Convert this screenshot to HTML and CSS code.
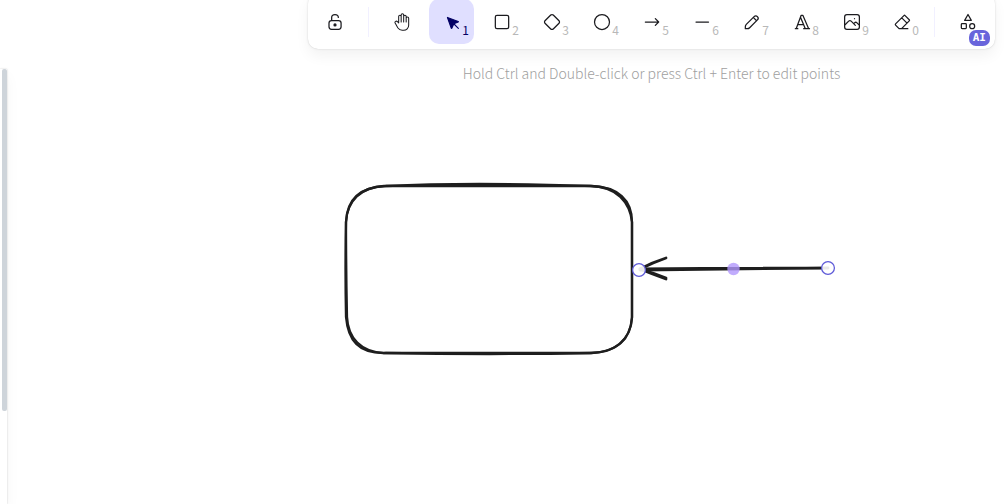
FILE: index.html
```html
<!DOCTYPE html>
<html lang="en">
<head>
<meta charset="utf-8">
<title>Whiteboard</title>
<link rel="stylesheet" href="styles.css">
</head>
<body>
<div class="app">
  <svg class="scene" aria-label="Drawing canvas">
    <g class="stroke">
      <path d="M386 186 Q470 182 592 186 C618 187 632 200 632 222 Q632 270 632 317 C631 340 616 352 592 353 Q490 355 386 353 C358 354 348 340 346 317 Q345 270 346 222 C347 200 360 187 386 186"/>
      <path d="M384 186 Q490 186 590 186 C617 186 630 203 632 222 L632 318 C630 341 614 353 590 353 Q490 353 384 353 C361 352 348 338 347 317 Q346 270 346 222 C347 201 361 187 384 186"/>
    </g>
    <g class="stroke arrow">
      <path d="M828 268 Q734 268 640 269 M828 268 Q734 269 640 270"/>
      <path d="M666 258 Q652 263 640 269 Q652 274 666 279 M666 258 Q653 262 640 269 Q654 273 666 278"/>
    </g>
    <circle class="handle" cx="639" cy="270" r="6.4"/>
    <circle class="handle" cx="828" cy="268" r="6.4"/>
    <circle class="midpoint" cx="733.5" cy="269" r="6.2"/>
  </svg>

  <aside class="sidebar"><div class="thumb"></div></aside>

  <header class="top">
    <div class="toolbar" role="toolbar" aria-label="Shapes">
      <button class="tool" aria-label="Keep selected tool active">
        <svg class="icon" viewBox="0 0 20 20"><rect x="3" y="8.54" width="12.08" height="8.75" rx="2.5"/><circle class="solid" cx="9" cy="12.9" r="1"/><path d="M5.67 8.33V5.42C5.67 3.8 7.16 2.5 9 2.5c1.84 0 3.33 1.3 3.33 2.92"/></svg>
      </button>
      <span class="divider"></span>
      <button class="tool" aria-label="Hand">
        <svg class="icon hand" viewBox="0 0 24 24"><path d="M8 13v-7.5a1.5 1.5 0 0 1 3 0v6.5M11 5.5v-2a1.5 1.5 0 1 1 3 0v8.5M14 5.5a1.5 1.5 0 0 1 3 0v6.5M17 7.5a1.5 1.5 0 0 1 3 0v8.5a6 6 0 0 1-6 6h-2h.2a6 6 0 0 1-5-2.7l-.2-.3c-.3-.48-1.4-2.39-3.29-5.73a1.5 1.5 0 0 1 .54-2.02a1.87 1.87 0 0 1 2.28.28l1.47 1.47"/></svg>
      </button>
      <button class="tool active" aria-label="Selection" aria-pressed="true">
        <svg class="icon cursor" viewBox="0 0 22 22"><path d="M6 6l4.15 11.8a.37.37 0 0 0 .66 0l2.19-4.8l4.79-2a.36.36 0 0 0 0-.64zM13.5 13.5l4.5 4.5"/></svg>
        <span class="key">1</span>
      </button>
      <button class="tool" aria-label="Rectangle">
        <svg class="icon wide" viewBox="0 0 24 24"><rect x="4" y="4" width="16" height="16" rx="2"/></svg>
        <span class="key">2</span>
      </button>
      <button class="tool" aria-label="Diamond">
        <svg class="icon wide" viewBox="0 0 24 24"><path d="M10.5 20.4l-6.9-6.9c-.78-.78-.78-2.22 0-3l6.9-6.9c.78-.78 2.22-.78 3 0l6.9 6.9c.78.78.78 2.22 0 3l-6.9 6.9c-.78.78-2.22.78-3 0z"/></svg>
        <span class="key">3</span>
      </button>
      <button class="tool" aria-label="Ellipse">
        <svg class="icon wide" viewBox="0 0 24 24"><circle cx="12" cy="12" r="9"/></svg>
        <span class="key">4</span>
      </button>
      <button class="tool" aria-label="Arrow">
        <svg class="icon wide" viewBox="0 0 24 24"><path d="M4 12h16M16 16l4-4M16 8l4 4"/></svg>
        <span class="key">5</span>
      </button>
      <button class="tool" aria-label="Line">
        <svg class="icon" viewBox="0 0 20 20"><path d="M4 10h12.5"/></svg>
        <span class="key">6</span>
      </button>
      <button class="tool" aria-label="Draw">
        <svg class="icon" viewBox="0 0 20 20"><path d="M7.64 15.69l7.78-7.77a2.36 2.36 0 1 0-3.34-3.34L4.31 12.36a3.33 3.33 0 0 0-.98 2.36v1.95h1.96c.88 0 1.73-.35 2.35-.98zM11.25 5.42l3.33 3.33"/></svg>
        <span class="key">7</span>
      </button>
      <button class="tool" aria-label="Text">
        <svg class="icon wide" viewBox="0 0 24 24"><path d="M4 20h3M14 20h7M6.9 15h6.9M10.2 6.3L16 20M5 20l6-16h2l7 16"/></svg>
        <span class="key">8</span>
      </button>
      <button class="tool" aria-label="Insert image">
        <svg class="icon" viewBox="0 0 20 20"><path d="M12.5 6.67h.01"/><rect x="2.63" y="2.63" width="14.75" height="14.75" rx="2.28"/><path d="M3.33 12.5l3.34-3.33c.77-.75 1.72-.75 2.5 0l4.16 4.16M11.67 11.67l.83-.84c.77-.74 1.73-.74 2.5 0l1.67 1.67"/></svg>
        <span class="key">9</span>
      </button>
      <button class="tool" aria-label="Eraser">
        <svg class="icon wide" viewBox="0 0 24 24"><path d="M19 20h-10.5l-4.21-4.3a1 1 0 0 1 0-1.41l10-10a1 1 0 0 1 1.41 0l5 5a1 1 0 0 1 0 1.41l-9.2 9.3M18 13.3l-6.3-6.3"/></svg>
        <span class="key">0</span>
      </button>
      <span class="divider"></span>
      <button class="tool" aria-label="More tools">
        <svg class="icon wide" viewBox="0 0 24 24"><path d="M12 3l-4 7h8z"/><circle cx="17" cy="17" r="3"/><rect x="4" y="14" width="6" height="6" rx="1"/></svg>
        <span class="badge">AI</span>
      </button>
    </div>
    <p class="hint">Hold Ctrl and Double-click or press Ctrl + Enter to edit points</p>
  </header>
</div>
</body>
</html>
```
FILE: styles.css
```css
* { box-sizing: border-box; }

body {
  margin: 0;
  background: #fff;
  color: #1b1b1f;
  font-family: "Noto Sans CJK SC", "Noto Sans", sans-serif;
}

.app {
  position: relative;
  display: flex;
  justify-content: space-between;
  min-height: 100vh;
  overflow: hidden;
}

.scene {
  position: absolute;
  inset: 0;
  width: 100%;
  height: 100%;
}

.stroke {
  fill: none;
  stroke: #1e1e1e;
  stroke-width: 2.3;
  stroke-linecap: round;
  stroke-linejoin: round;
}

.arrow { stroke-width: 2.8; }

.handle {
  fill: rgba(255, 255, 255, 0.9);
  stroke: #5e5ad8;
  stroke-width: 1.25;
}

.midpoint { fill: rgba(177, 151, 252, 0.8); }

.sidebar {
  position: relative;
  width: 7px;
  margin-top: 69px;
  padding-left: 2px;
  background: #fff;
  box-shadow: 0 0 1px rgba(0, 0, 0, 0.17), 0 0 3px rgba(0, 0, 0, 0.08), 0 7px 14px rgba(0, 0, 0, 0.05);
}

.thumb {
  height: 342px;
  border-radius: 2px;
  background: #ced4da;
}

.top {
  position: relative;
  display: flex;
  flex-direction: column;
  align-items: center;
  margin: -6px 9px 0 0;
}

.toolbar {
  display: flex;
  align-items: center;
  gap: 5px;
  padding: 5px;
  border-radius: 10px;
  background: #fff;
  box-shadow: 0 0 1px rgba(0, 0, 0, 0.17), 0 0 3px rgba(0, 0, 0, 0.08), 0 7px 14px rgba(0, 0, 0, 0.05);
}

.tool {
  position: relative;
  display: flex;
  align-items: center;
  justify-content: center;
  width: 45px;
  height: 45px;
  padding: 0;
  border: 0;
  border-radius: 10px;
  background: transparent;
  color: #1b1b1f;
  font-family: inherit;
}

.tool.active {
  background: #e0dfff;
  color: #030064;
}

.divider {
  width: 1px;
  height: 30px;
  margin: 0 5px;
  background: #f1f0ff;
}

.icon {
  width: 20px;
  height: 20px;
  fill: none;
  stroke: currentColor;
  stroke-width: 1.25;
  stroke-linecap: round;
  stroke-linejoin: round;
}

.icon.wide { stroke-width: 1.5; }
.icon.hand { stroke-width: 1.25; }
.icon.cursor { fill: currentColor; }
.icon .solid { fill: currentColor; }

.key {
  position: absolute;
  right: 5px;
  bottom: 6px;
  color: #b8b8b8;
  font-size: 12px;
  line-height: 16px;
}

.active .key { color: #030064; }

.badge {
  position: absolute;
  right: 0;
  bottom: -2px;
  padding: 0 4px;
  border-radius: 7px;
  background: #6965db;
  color: #fff;
  font: bold 11px/16px "DejaVu Sans Mono", monospace;
}

.hint {
  margin: 14px 0 0;
  color: #a0a0a0;
  font-size: 14px;
  font-weight: 300;
  line-height: 20px;
}
```
